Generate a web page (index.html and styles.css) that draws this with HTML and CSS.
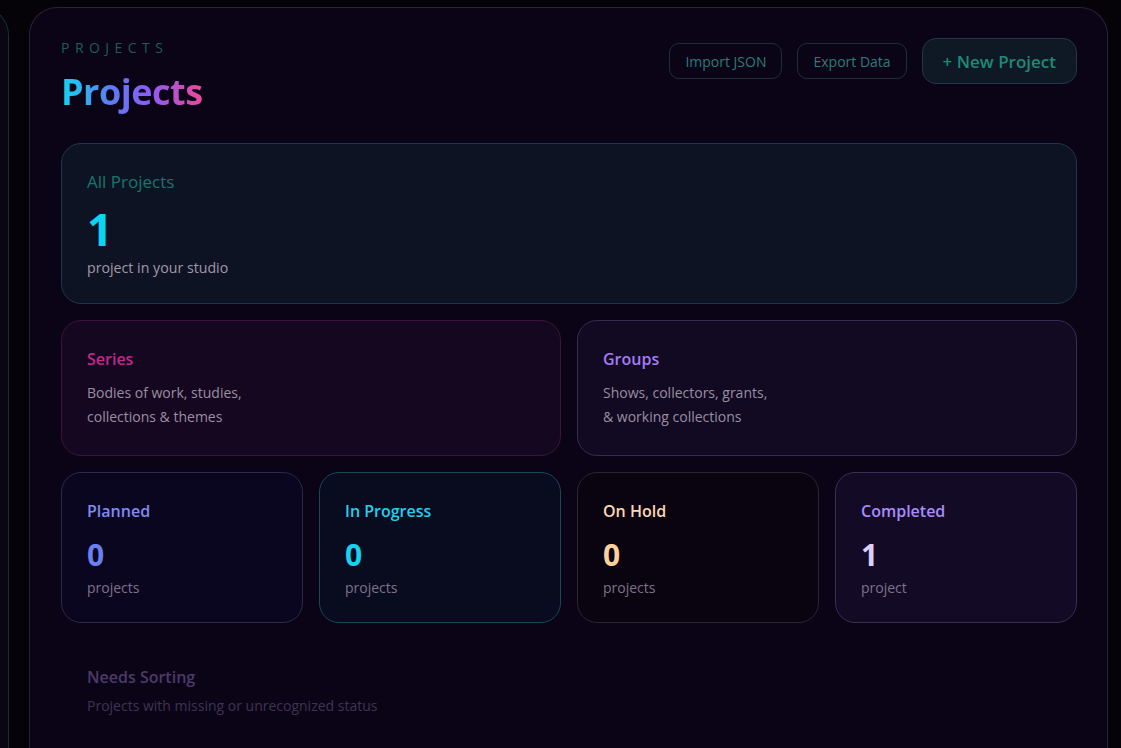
FILE: index.html
```html
<!DOCTYPE html>
<html lang="en">
<head>
<meta charset="utf-8">
<title>Projects</title>
<link rel="stylesheet" href="styles.css">
</head>
<body>
<div class="shell">
  <aside class="sidebar"></aside>
  <main class="panel">
    <header class="head">
      <div class="head-text">
        <div class="eyebrow">PROJECTS</div>
        <h1 class="title">Projects</h1>
      </div>
      <div class="actions">
        <button class="btn">Import JSON</button>
        <button class="btn">Export Data</button>
        <button class="btn btn-primary">+ New Project</button>
      </div>
    </header>

    <section class="card card-all">
      <div class="card-label">All Projects</div>
      <div class="big-num">1</div>
      <div class="card-sub">project in your studio</div>
    </section>

    <div class="row-two">
      <section class="card card-series">
        <div class="card-label strong">Series</div>
        <p class="card-desc">Bodies of work, studies,<br>collections &amp; themes</p>
      </section>
      <section class="card card-groups">
        <div class="card-label strong">Groups</div>
        <p class="card-desc">Shows, collectors, grants,<br>&amp; working collections</p>
      </section>
    </div>

    <div class="row-four">
      <section class="card stat stat-planned">
        <div class="card-label strong">Planned</div>
        <div class="stat-num">0</div>
        <div class="stat-sub">projects</div>
      </section>
      <section class="card stat stat-progress">
        <div class="card-label strong">In Progress</div>
        <div class="stat-num">0</div>
        <div class="stat-sub">projects</div>
      </section>
      <section class="card stat stat-hold">
        <div class="card-label strong">On Hold</div>
        <div class="stat-num">0</div>
        <div class="stat-sub">projects</div>
      </section>
      <section class="card stat stat-done">
        <div class="card-label strong">Completed</div>
        <div class="stat-num">1</div>
        <div class="stat-sub">project</div>
      </section>
    </div>

    <section class="sorting">
      <div class="card-label strong">Needs Sorting</div>
      <p class="sorting-desc">Projects with missing or unrecognized status</p>
    </section>
  </main>
</div>
</body>
</html>
```

FILE: styles.css
```css
* { box-sizing: border-box; }

html, body {
  margin: 0;
  height: 100%;
  overflow: hidden;
}

body {
  background: #050208;
  font-family: "Segoe UI", "Open Sans", "Noto Sans", sans-serif;
  color: #a298a8;
}

.shell {
  display: flex;
  gap: 20px;
  padding-top: 7px;
  padding-right: 13px;
  height: 100%;
}

.sidebar {
  flex: 0 0 260px;
  margin-left: -251px;
  background: #0a0612;
  border: 1px solid #14303a;
  border-radius: 0 28px 0 0;
  border-bottom: none;
}

.panel {
  flex: 1;
  background: #0b0417;
  border: 1px solid #2a2236;
  border-bottom: none;
  border-radius: 28px 28px 0 0;
  padding: 30px 30px 0 31px;
  display: flex;
  flex-direction: column;
  gap: 16px;
}

.head {
  display: flex;
  justify-content: space-between;
  align-items: flex-start;
  margin-bottom: 13px;
}

.eyebrow {
  font-size: 14px;
  letter-spacing: 0.39em;
  color: #1b5c59;
  line-height: 20px;
  margin-top: 0;
}

.title {
  margin: 12px 0 0;
  font-size: 36px;
  font-weight: 700;
  line-height: 44px;
  letter-spacing: -0.5px;
  background: linear-gradient(90deg, #12d6f2 0%, #5b7cf0 35%, #8b5cf6 62%, #ec4899 100%);
  -webkit-background-clip: text;
  background-clip: text;
  color: transparent;
  display: inline-block;
}

.actions {
  display: flex;
  align-items: center;
  gap: 15px;
}

.btn {
  font-family: inherit;
  font-size: 14px;
  color: #2a7d78;
  background: transparent;
  border: 1px solid #1c2e3c;
  border-radius: 10px;
  height: 36px;
  padding: 0 15px;
}

.btn-primary {
  height: 46px;
  font-size: 17px;
  font-weight: 600;
  color: #1c8a78;
  background: #0f1825;
  border-color: #1e3a46;
  border-radius: 14px;
  padding: 0 20px;
}

.card {
  border: 1px solid #2a2236;
  border-radius: 20px;
  padding: 26px 25px 25px;
}

.card-label {
  font-size: 17px;
  line-height: 24px;
}

.card-label.strong {
  font-weight: 600;
  font-size: 16px;
}

.card-all {
  background: #0e1324;
  border-color: #1c3645;
  padding-bottom: 24px;
}

.card-all .card-label { color: #12786b; }

.big-num {
  font-size: 45px;
  font-weight: 700;
  line-height: 56px;
  color: #08d5f2;
  margin-top: 7px;
}

.card-sub {
  font-size: 14.2px;
  line-height: 22px;
  color: #a298a8;
}

.row-two {
  display: grid;
  grid-template-columns: 1fr 1fr;
  gap: 16px;
}

.card-desc {
  margin: 10px 0 0;
  font-size: 14px;
  line-height: 24px;
  color: #9a8fa0;
}

.card-series {
  background: #160720;
  border-color: #3b1538;
  padding-bottom: 26px;
}
.card-series .card-label { color: #c2278a; }

.card-groups {
  background: #120923;
  border-color: #372d4e;
  padding-bottom: 26px;
}
.card-groups .card-label { color: #a57cf5; }

.row-four {
  display: grid;
  grid-template-columns: repeat(4, 1fr);
  gap: 16px;
}

.stat { padding-bottom: 23px; }

.stat-num {
  font-size: 30px;
  font-weight: 700;
  line-height: 40px;
  margin-top: 12px;
  margin-bottom: 2px;
}

.stat-sub {
  font-size: 14px;
  line-height: 22px;
  color: #7e7288;
}

.stat-planned { background: #0b0620; border-color: #2c2850; }
.stat-planned .card-label { color: #7f8bf2; }
.stat-planned .stat-num { color: #6b80f0; }

.stat-progress { background: #090c1f; border-color: #154a55; }
.stat-progress .card-label { color: #1fd2ec; }
.stat-progress .stat-num { color: #16d2ee; }

.stat-hold { background: #0a0310; border-color: #2d2433; }
.stat-hold .card-label { color: #fbd7b0; }
.stat-hold .stat-num { color: #fcd19e; }

.stat-done { background: #130a26; border-color: #3a2f50; }
.stat-done .card-label { color: #a98cf8; }
.stat-done .stat-num { color: #dccfff; }

.sorting {
  padding: 26px 26px;
}

.sorting .card-label { color: #4b3a6a; }

.sorting-desc {
  margin: 6px 0 0;
  font-size: 14px;
  line-height: 22px;
  color: #3e3452;
}
```
